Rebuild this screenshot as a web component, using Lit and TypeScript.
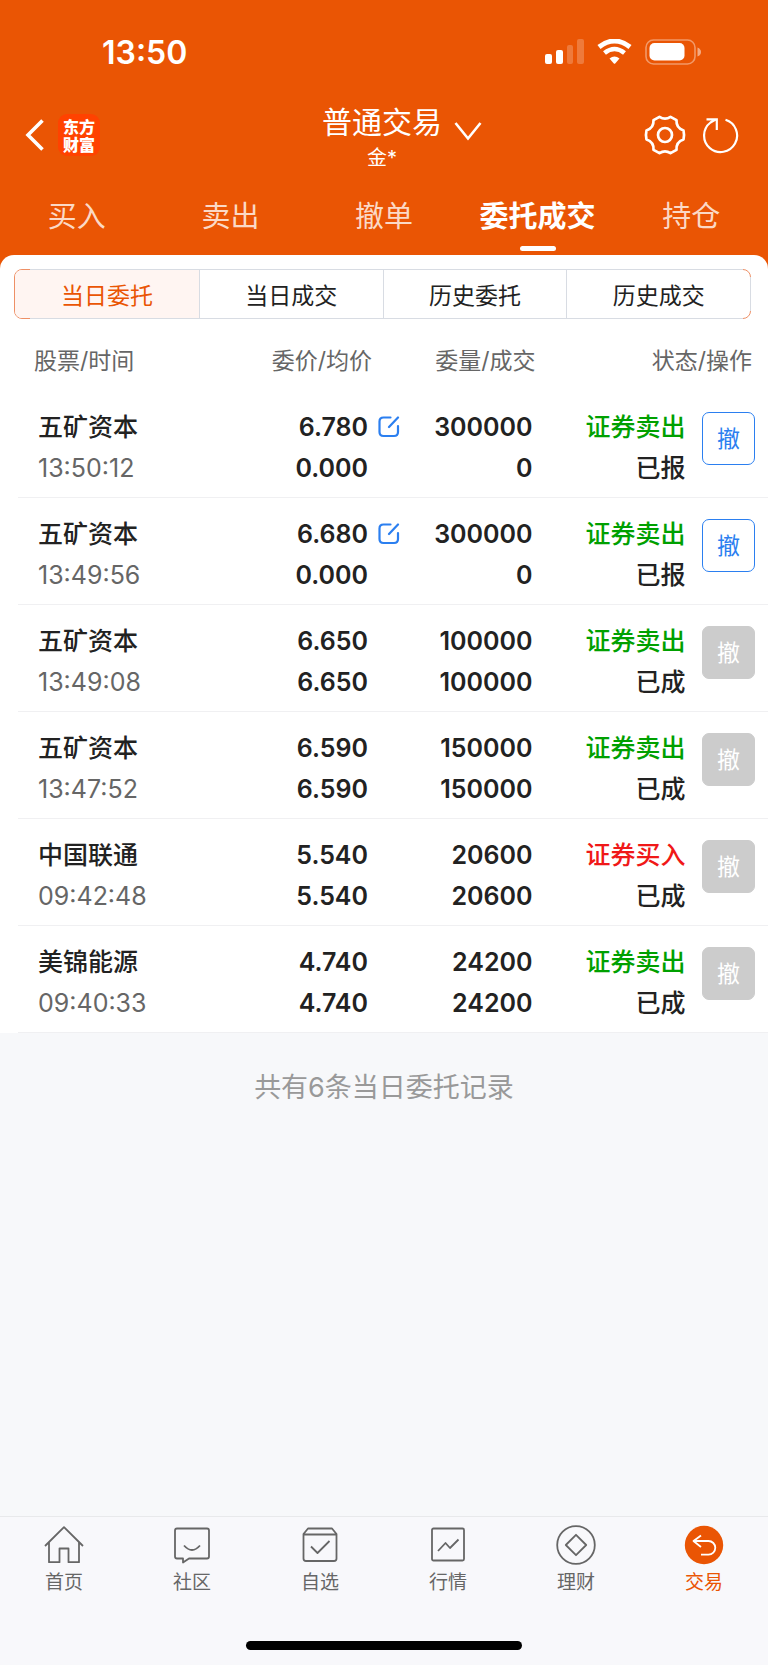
import { LitElement, html, css, svg } from "lit";
import { customElement, state } from "lit/decorators.js";
import { classMap } from "lit/directives/class-map.js";

interface Order {
  name: string;
  time: string;
  price: string;
  avg: string;
  qty: string;
  done: string;
  side: "sell" | "buy";
  status: string;
  open: boolean;
}

const ORDERS: Order[] = [
  { name: "五矿资本", time: "13:50:12", price: "6.780", avg: "0.000", qty: "300000", done: "0", side: "sell", status: "已报", open: true },
  { name: "五矿资本", time: "13:49:56", price: "6.680", avg: "0.000", qty: "300000", done: "0", side: "sell", status: "已报", open: true },
  { name: "五矿资本", time: "13:49:08", price: "6.650", avg: "6.650", qty: "100000", done: "100000", side: "sell", status: "已成", open: false },
  { name: "五矿资本", time: "13:47:52", price: "6.590", avg: "6.590", qty: "150000", done: "150000", side: "sell", status: "已成", open: false },
  { name: "中国联通", time: "09:42:48", price: "5.540", avg: "5.540", qty: "20600", done: "20600", side: "buy", status: "已成", open: false },
  { name: "美锦能源", time: "09:40:33", price: "4.740", avg: "4.740", qty: "24200", done: "24200", side: "sell", status: "已成", open: false },
];

const TABS = ["买入", "卖出", "撤单", "委托成交", "持仓"];
const SEGMENTS = ["当日委托", "当日成交", "历史委托", "历史成交"];

const NAV = [
  {
    label: "首页",
    icon: svg`<path d="M1 21 20 2.200 39 21M5 17.500V37.200H15.500V23.500H24.500V37.200H35V17.500"/>`,
  },
  {
    label: "社区",
    icon: svg`<path d="M5 3.500H35Q37 3.500 37 5.500V31.500Q37 33.500 35 33.500H17L11 37.600V33.500H5Q3 33.500 3 31.500V5.500Q3 3.500 5 3.500Z"/><path d="M12 20.500Q20 29.500 28 20.500"/>`,
  },
  {
    label: "自选",
    icon: svg`<path d="M8 3.500H32L36.500 9V33.500Q36.500 36 34 36H6Q3.500 36 3.500 33.500V9ZM3.500 9.500H36.500M11 21.500 17.500 28 29.500 16"/>`,
  },
  {
    label: "行情",
    icon: svg`<rect x="4" y="3.500" width="32" height="32" rx="1.500"/><path d="M10 26 17.500 18 22 23 30.500 14.500"/>`,
  },
  {
    label: "理财",
    icon: svg`<circle cx="20" cy="20" r="18.800"/><path d="M20 9.800 30.200 20 20 30.200 9.800 20Z"/>`,
  },
  {
    label: "交易",
    icon: svg`<circle cx="20" cy="20" r="19.200" fill="#ea5504" stroke="none"/><path stroke="#fff" d="M17 10.500 9.500 16 17 22M9.500 16H24.500A6.800 6.800 0 0 1 24.500 29.600H17"/>`,
  },
];

@customElement("app-root")
export class AppRoot extends LitElement {
  @state() private tab = 3;
  @state() private segment = 0;
  @state() private page = 5;

  static styles = css`
    :host {
      display: flex;
      flex-direction: column;
      min-height: 100vh;
      background: #f7f8fa;
      color: #222;
      font-family: Inter, "Noto Sans CJK SC", sans-serif;
    }
    * {
      box-sizing: border-box;
    }
    button {
      margin: 0;
      padding: 0;
      border: 0;
      background: none;
      color: inherit;
      font: inherit;
      cursor: pointer;
    }
    svg {
      display: block;
      fill: none;
      stroke: currentColor;
    }
    .top {
      padding-bottom: 16px;
      background: #ea5504;
      color: #fff;
    }
    .status-bar {
      display: flex;
      align-items: center;
      justify-content: space-between;
      height: 98px;
      padding: 6px 67px 0 102px;
    }
    .clock {
      font-size: 32px;
      font-weight: 600;
    }
    .title-bar {
      display: grid;
      grid-template-columns: 1fr auto 1fr;
      align-items: center;
      padding: 0 28px 0 24px;
    }
    .lead {
      display: flex;
      align-items: center;
      gap: 13px;
    }
    .brand {
      width: 42px;
      height: 42px;
      padding-top: 3px;
      border-radius: 9px;
      background: #ff4200;
      font-family: "Noto Sans CJK SC", sans-serif;
      font-size: 16px;
      font-weight: 900;
      line-height: 18px;
      text-align: center;
    }
    .account {
      padding-top: 2px;
      text-align: center;
    }
    .account h1 {
      margin: 0;
      font-size: 30px;
      font-weight: 400;
      line-height: 44px;
    }
    .account p {
      margin: 0;
      font-size: 20px;
      line-height: 28px;
    }
    .actions {
      display: flex;
      align-items: center;
      gap: 16px;
    }
    .expand {
      margin: 0 auto 8px 12px;
    }
    .tabs {
      display: grid;
      grid-template-columns: repeat(5, 1fr);
    }
    .tab {
      display: flex;
      flex-direction: column;
      align-items: center;
      height: 83px;
      padding: 23px 0 4px;
      color: #fbd9c6;
      font-size: 29px;
      line-height: 44px;
    }
    .tab.on {
      color: #fff;
      font-weight: 700;
    }
    .tab.on::after {
      content: "";
      width: 36px;
      height: 5px;
      margin-top: auto;
      border-radius: 3px;
      background: #fff;
    }
    .panel {
      margin-top: -16px;
      padding-top: 14px;
      border-radius: 14px 14px 0 0;
      background: #fff;
    }
    .segments {
      position: relative;
      display: grid;
      grid-template-columns: repeat(4, 1fr);
      height: 50px;
      margin: 0 17px 0 14px;
      border: 1px solid #ee9066;
      border-radius: 8px;
    }
    .segments::after {
      content: "";
      position: absolute;
      inset: -1px;
      pointer-events: none;
      background:
        linear-gradient(#d8dce3, #d8dce3) 16px 0 / calc(100% - 24px) 1px no-repeat,
        linear-gradient(#d8dce3, #d8dce3) 16px 100% / calc(100% - 24px) 1px no-repeat,
        linear-gradient(#d8dce3, #d8dce3) 100% 8px / 1px calc(100% - 16px) no-repeat;
    }
    .segment {
      font-size: 23px;
    }
    .segment + .segment {
      border-left: 1px solid #d8dce3;
    }
    .segment:first-child {
      border-radius: 7px 0 0 7px;
    }
    .segment.on {
      background: #fff5f2;
      color: #ea5504;
    }
    .orders {
      width: calc(100% - 18px);
      margin-left: 18px;
      border-collapse: collapse;
      table-layout: fixed;
    }
    .c-name { width: 27%; }
    .c-price { width: 25%; }
    .c-qty { width: 17%; }
    .c-state { width: 20%; }
    .c-act { width: 11%; }
    th {
      padding: 27px 0 15px;
      color: #666;
      font-size: 23px;
      font-weight: 400;
      line-height: 30px;
      text-align: right;
      white-space: nowrap;
    }
    th.h-name {
      padding-left: 16px;
      text-align: left;
    }
    th.h-price {
      padding-right: 36px;
    }
    th.h-state {
      padding-right: 16px;
    }
    td {
      padding: 16px 0 8px;
      border-bottom: 1px solid #f0f0f2;
      font-size: 25px;
      font-weight: 600;
      line-height: 41px;
      text-align: right;
      vertical-align: top;
      white-space: nowrap;
    }
    td.name {
      padding-left: 20px;
      font-weight: 500;
      text-align: left;
    }
    .time {
      color: #666;
      font-weight: 400;
    }
    td.price {
      padding-right: 8px;
    }
    .quote {
      display: grid;
      grid-template-columns: 1fr 22px;
      column-gap: 10px;
      align-items: center;
    }
    .edit {
      padding-bottom: 2px;
      color: #2b7ff0;
    }
    td.qty {
      padding-right: 3px;
    }
    td.state {
      font-weight: 500;
    }
    .sell {
      color: #00a000;
    }
    .buy {
      color: #f01818;
    }
    td.act {
      padding: 21px 13px 0 0;
    }
    .cancel {
      display: block;
      width: 53px;
      height: 53px;
      margin-left: auto;
      border: 1px solid #2b7ff0;
      border-radius: 7px;
      color: #2b7ff0;
      font-size: 23px;
      font-weight: 400;
      line-height: 50px;
    }
    .cancel:disabled {
      border-color: #ccc;
      background: #ccc;
      color: #fff;
      cursor: default;
    }
    .summary {
      margin: 0;
      padding: 35px 0;
      color: #999;
      font-size: 27px;
      line-height: 40px;
      text-align: center;
    }
    .bottom {
      margin-top: auto;
      padding-bottom: 15px;
      border-top: 1px solid #e8e9eb;
      background: #f8f8fb;
    }
    .nav {
      display: grid;
      grid-template-columns: repeat(6, 1fr);
      padding-top: 8px;
    }
    .nav-item {
      display: flex;
      flex-direction: column;
      align-items: center;
      gap: 4px;
      color: #666;
      font-size: 19px;
      line-height: 28px;
      text-decoration: none;
    }
    .nav-item.on {
      color: #ea5504;
    }
    .home-bar {
      width: 36%;
      height: 9px;
      margin: 44px auto 0;
      border-radius: 5px;
      background: #000;
    }
  `;

  private renderStatusIcons() {
    return html`<svg width="156" height="26" viewBox="0 0 156 26" stroke="none" aria-hidden="true">
      <g fill="#fff" stroke="none">
        <rect x="0" y="15" width="7" height="10" rx="2" />
        <rect x="11" y="11" width="7" height="14" rx="2" />
        <rect x="22" y="6" width="6" height="19" rx="2" opacity=".22" />
        <rect x="32" y="0" width="7" height="25" rx="2" opacity=".22" />
      </g>
      <g stroke="#fff" fill="none">
        <path d="M54 8Q69.500 -4 85 8" stroke-width="5" />
        <path d="M59.500 14Q69.500 6 79.500 14" stroke-width="4.600" />
      </g>
      <path fill="#fff" stroke="none" d="M64.500 19.500Q69.500 15.500 74.500 19.500L70.200 24.400Q69.500 25 68.800 24.400Z" />
      <rect x="101" y="1" width="49" height="24" rx="7.500" fill="none" stroke="#fff" stroke-width="1.600" opacity=".4" />
      <rect x="104.500" y="4" width="35" height="17.500" rx="5" fill="#fff" stroke="none" />
      <path d="M152.500 8.500Q156 10 156 13T152.500 17.500Z" fill="#fff" stroke="none" opacity=".5" />
    </svg>`;
  }

  private renderOrder(o: Order) {
    return html`<tr>
      <td class="name">
        <div>${o.name}</div>
        <div class="time">${o.time}</div>
      </td>
      <td class="price">
        <div class="quote">
          <span>${o.price}</span>
          ${o.open
            ? html`<button class="edit" aria-label="改价">
                <svg width="22" height="22" viewBox="0 0 22 22" stroke-width="2.200" stroke-linecap="round">
                  <path d="M12.500 1.500H5.500Q1.500 1.500 1.500 5.500V16Q1.500 20 5.500 20H16Q20 20 20 16V10M11 11 20 1.500" />
                </svg>
              </button>`
            : ""}
        </div>
        <div class="quote"><span>${o.avg}</span></div>
      </td>
      <td class="qty">
        <div>${o.qty}</div>
        <div>${o.done}</div>
      </td>
      <td class="state">
        <div class=${o.side}>${o.side === "sell" ? "证券卖出" : "证券买入"}</div>
        <div>${o.status}</div>
      </td>
      <td class="act"><button class="cancel" ?disabled=${!o.open}>撤</button></td>
    </tr>`;
  }

  render() {
    return html`
      <header class="top">
        <div class="status-bar">
          <span class="clock">13:50</span>
          ${this.renderStatusIcons()}
        </div>
        <div class="title-bar">
          <div class="lead">
            <button aria-label="返回">
              <svg width="21" height="32" viewBox="0 0 21 32" stroke-width="3.600">
                <path d="M18.500 1.500 4 16 18.500 30.500" />
              </svg>
            </button>
            <div class="brand">东方<br />财富</div>
          </div>
          <div class="account">
            <h1>普通交易</h1>
            <p>金*</p>
          </div>
          <div class="actions">
            <button class="expand" aria-label="切换账户">
              <svg width="28" height="20" viewBox="0 0 28 20" stroke-width="2.600">
                <path d="M1.500 2 14 17.500 26.500 2" />
              </svg>
            </button>
            <button aria-label="设置">
              <svg width="42" height="40" viewBox="0 0 42 40" stroke-width="2.700" stroke-linejoin="round">
                <path d="M15.500 1.800Q21 5.500 26.500 1.800L32.500 5.200Q32 13 39.500 15.500Q40.600 20 39.500 24.500Q32 27 32.500 34.800L26.500 38.200Q21 34.500 15.500 38.200L9.500 34.800Q10 27 2.500 24.500Q1.400 20 2.500 15.500Q10 13 9.500 5.200Z" />
                <circle cx="21" cy="20" r="7" />
              </svg>
            </button>
            <button aria-label="刷新">
              <svg width="38" height="38" viewBox="0 0 38 38" stroke-width="2.200">
                <path d="M23.500 3.800A16.500 16.500 0 1 1 8.500 6.500L14 3.400M4.500 3.400H14.800V14" />
              </svg>
            </button>
          </div>
        </div>
        <nav class="tabs">
          ${TABS.map(
            (t, i) => html`<button class=${classMap({ tab: true, on: i === this.tab })} @click=${() => (this.tab = i)}>${t}</button>`
          )}
        </nav>
      </header>
      <main>
        <section class="panel">
          <div class="segments">
            ${SEGMENTS.map(
              (s, i) =>
                html`<button class=${classMap({ segment: true, on: i === this.segment })} @click=${() => (this.segment = i)}>${s}</button>`
            )}
          </div>
          <table class="orders">
            <colgroup>
              <col class="c-name" />
              <col class="c-price" />
              <col class="c-qty" />
              <col class="c-state" />
              <col class="c-act" />
            </colgroup>
            <thead>
              <tr>
                <th class="h-name">股票/时间</th>
                <th class="h-price">委价/均价</th>
                <th>委量/成交</th>
                <th class="h-state" colspan="2">状态/操作</th>
              </tr>
            </thead>
            <tbody>
              ${ORDERS.map((o) => this.renderOrder(o))}
            </tbody>
          </table>
        </section>
        <p class="summary">共有6条当日委托记录</p>
      </main>
      <footer class="bottom">
        <nav class="nav">
          ${NAV.map(
            (n, i) => html`<a
              class=${classMap({ "nav-item": true, on: i === this.page })}
              href="#"
              @click=${(e: Event) => {
                e.preventDefault();
                this.page = i;
              }}
            >
              <svg width="40" height="40" viewBox="0 0 40 40" stroke-width="1.800" stroke-linejoin="round">${n.icon}</svg>
              <span>${n.label}</span>
            </a>`
          )}
        </nav>
        <div class="home-bar"></div>
      </footer>
    `;
  }
}
